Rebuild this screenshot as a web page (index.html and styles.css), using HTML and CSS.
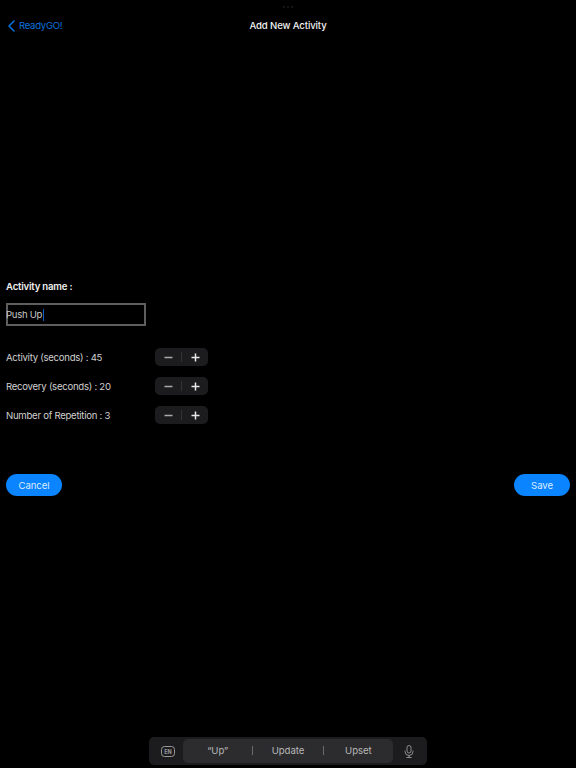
FILE: index.html
```html
<!DOCTYPE html>
<html lang="en">
<head>
<meta charset="utf-8">
<title>Add New Activity</title>
<link rel="stylesheet" href="styles.css">
</head>
<body>
<div class="page">
  <div class="handle"><i></i><i></i><i></i></div>
  <header class="nav">
    <a class="back">
      <svg class="chev" width="7" height="12" viewBox="0 0 7 12"><path d="M6 1 1 6l5 5" fill="none" stroke="currentColor" stroke-width="1.5" stroke-linecap="round" stroke-linejoin="round"/></svg>
      <span>ReadyGO!</span>
    </a>
    <h1 class="title">Add New Activity</h1>
  </header>
  <main class="form">
    <label class="name-label">Activity name :</label>
    <div class="field"><span class="field-text">Push Up</span><b class="caret"></b></div>
    <div class="rows">
      <div class="row"><span class="row-label">Activity (seconds) : 45</span>
        <div class="stepper"><button class="step minus"><svg width="9" height="9" viewBox="0 0 9 9"><path d="M.5 4.5h8" stroke="currentColor" stroke-width="1.500"/></svg></button><i class="sep"></i><button class="step"><svg width="9" height="9" viewBox="0 0 9 9"><path d="M.5 4.5h8M4.500.5v8" stroke="currentColor" stroke-width="1.500"/></svg></button></div>
      </div>
      <div class="row"><span class="row-label">Recovery (seconds) : 20</span>
        <div class="stepper"><button class="step minus"><svg width="9" height="9" viewBox="0 0 9 9"><path d="M.5 4.5h8" stroke="currentColor" stroke-width="1.500"/></svg></button><i class="sep"></i><button class="step"><svg width="9" height="9" viewBox="0 0 9 9"><path d="M.5 4.5h8M4.500.5v8" stroke="currentColor" stroke-width="1.500"/></svg></button></div>
      </div>
      <div class="row"><span class="row-label">Number of Repetition : 3</span>
        <div class="stepper"><button class="step minus"><svg width="9" height="9" viewBox="0 0 9 9"><path d="M.5 4.5h8" stroke="currentColor" stroke-width="1.500"/></svg></button><i class="sep"></i><button class="step"><svg width="9" height="9" viewBox="0 0 9 9"><path d="M.5 4.5h8M4.500.5v8" stroke="currentColor" stroke-width="1.500"/></svg></button></div>
      </div>
    </div>
    <div class="actions">
      <button class="pill cancel">Cancel</button>
      <button class="pill save">Save</button>
    </div>
  </main>
  <footer class="kb">
    <div class="bar">
      <svg class="en" width="14" height="11" viewBox="0 0 14 11"><rect x=".5" y=".5" width="13" height="10" rx="3" fill="none" stroke="currentColor"/><text x="7" y="7.6" text-anchor="middle" class="en-text">EN</text></svg>
      <div class="sugg">
        <span class="s">“Up”</span><i class="bar-sep"></i><span class="s">Update</span><i class="bar-sep"></i><span class="s">Upset</span>
      </div>
      <svg class="mic" width="10" height="13" viewBox="0 0 10 13"><rect x="3" y=".5" width="4" height="7.5" rx="2" fill="none" stroke="currentColor" stroke-width=".9"/><path d="M1 6v.5a4 4 0 0 0 8 0V6M5 10.500V12.500M2.800 12.500h4.400" fill="none" stroke="currentColor" stroke-width=".9" stroke-linecap="round"/></svg>
    </div>
  </footer>
</div>
</body>
</html>
```
FILE: styles.css
```css
* { box-sizing: border-box; }
html, body { margin: 0; background: #000; }
.page {
  width: 576px;
  height: 768px;
  display: flex;
  flex-direction: column;
  background: #000;
  color: #fff;
  font-family: Inter, "Liberation Sans", sans-serif;
  overflow: hidden;
}
.handle {
  display: flex;
  justify-content: center;
  gap: 2px;
  padding-top: 6px;
  height: 8px;
}
.handle i { width: 2px; height: 2px; border-radius: 50%; background: #1c1c1e; }
.nav {
  display: flex;
  align-items: center;
  justify-content: center;
  position: relative;
  height: 35px;
  flex: none;
}
.back {
  position: absolute;
  left: 8px;
  top: 12px;
  display: flex;
  align-items: center;
  gap: 4px;
  color: #0a72de;
  font-size: 9.600px;
  letter-spacing: -0.300px;
  line-height: 12px;
}
.title { margin: 0; font-size: 9.600px; letter-spacing: -0.130px; line-height: 12px; font-weight: 500; color: #f2f2f2; }
.form {
  flex: 1;
  display: flex;
  flex-direction: column;
  padding: 238px 6px 0;
}
.name-label { font-size: 9.600px; letter-spacing: -0.200px; line-height: 12px; font-weight: 600; color: #f0f0f0; }
.field {
  margin-top: 10px;
  width: 140px;
  height: 23px;
  border: 2px solid #5e5e5e;
  display: flex;
  align-items: center;
  font-size: 9.600px;
  letter-spacing: -0.300px;
  color: #c8c8c8;
}
.field-text { margin-left: -2px; }
.caret { width: 1px; height: 12px; margin-left: 1px; background: #0a5cc0; }
.rows { margin-top: 22px; display: flex; flex-direction: column; gap: 11px; }
.row { display: flex; align-items: center; height: 18px; }
.row-label { width: 149px; font-size: 9.600px; letter-spacing: -0.270px; color: #d0d0d0; }
.stepper {
  width: 53px;
  height: 18px;
  border-radius: 5px;
  background: #1c1c1e;
  display: flex;
  align-items: center;
}
.step {
  flex: 1;
  height: 18px;
  padding: 0;
  border: 0;
  background: none;
  color: #e8e8e8;
  display: flex;
  align-items: center;
  justify-content: center;
}
.minus { color: #a8a8a8; }
.sep { width: 1px; height: 10px; background: #333336; }
.actions { margin-top: 50px; display: flex; justify-content: space-between; }
.pill {
  height: 22px;
  border: 0;
  border-radius: 11px;
  background: #0a84ff;
  color: #dcebff;
  font-family: inherit;
  font-size: 9.600px;
  letter-spacing: -0.100px;
  padding: 0;
}
.cancel { width: 56px; }
.save { width: 56px; }
.kb {
  flex: none;
  display: flex;
  justify-content: center;
  padding-bottom: 3px;
}
.bar {
  width: 278px;
  height: 28px;
  border-radius: 5px;
  background: #1c1c1e;
  display: flex;
  align-items: center;
  color: #b8b8b8;
}
.en { margin-left: 12px; flex: none; color: #999; }
.en-text { font-size: 5.500px; font-weight: 700; fill: currentColor; font-family: Inter, sans-serif; }
.sugg {
  margin-left: 8px;
  width: 210px;
  height: 24px;
  border-radius: 5px;
  background: #2c2c2e;
  display: flex;
  align-items: center;
  font-size: 9.600px;
  letter-spacing: -0.080px;
  padding-bottom: 1px;
}
.s { flex: 1; text-align: center; }
.bar-sep { width: 1px; height: 9px; background: #6a6a6c; }
.mic { margin-left: 11px; flex: none; color: #999; }
```
